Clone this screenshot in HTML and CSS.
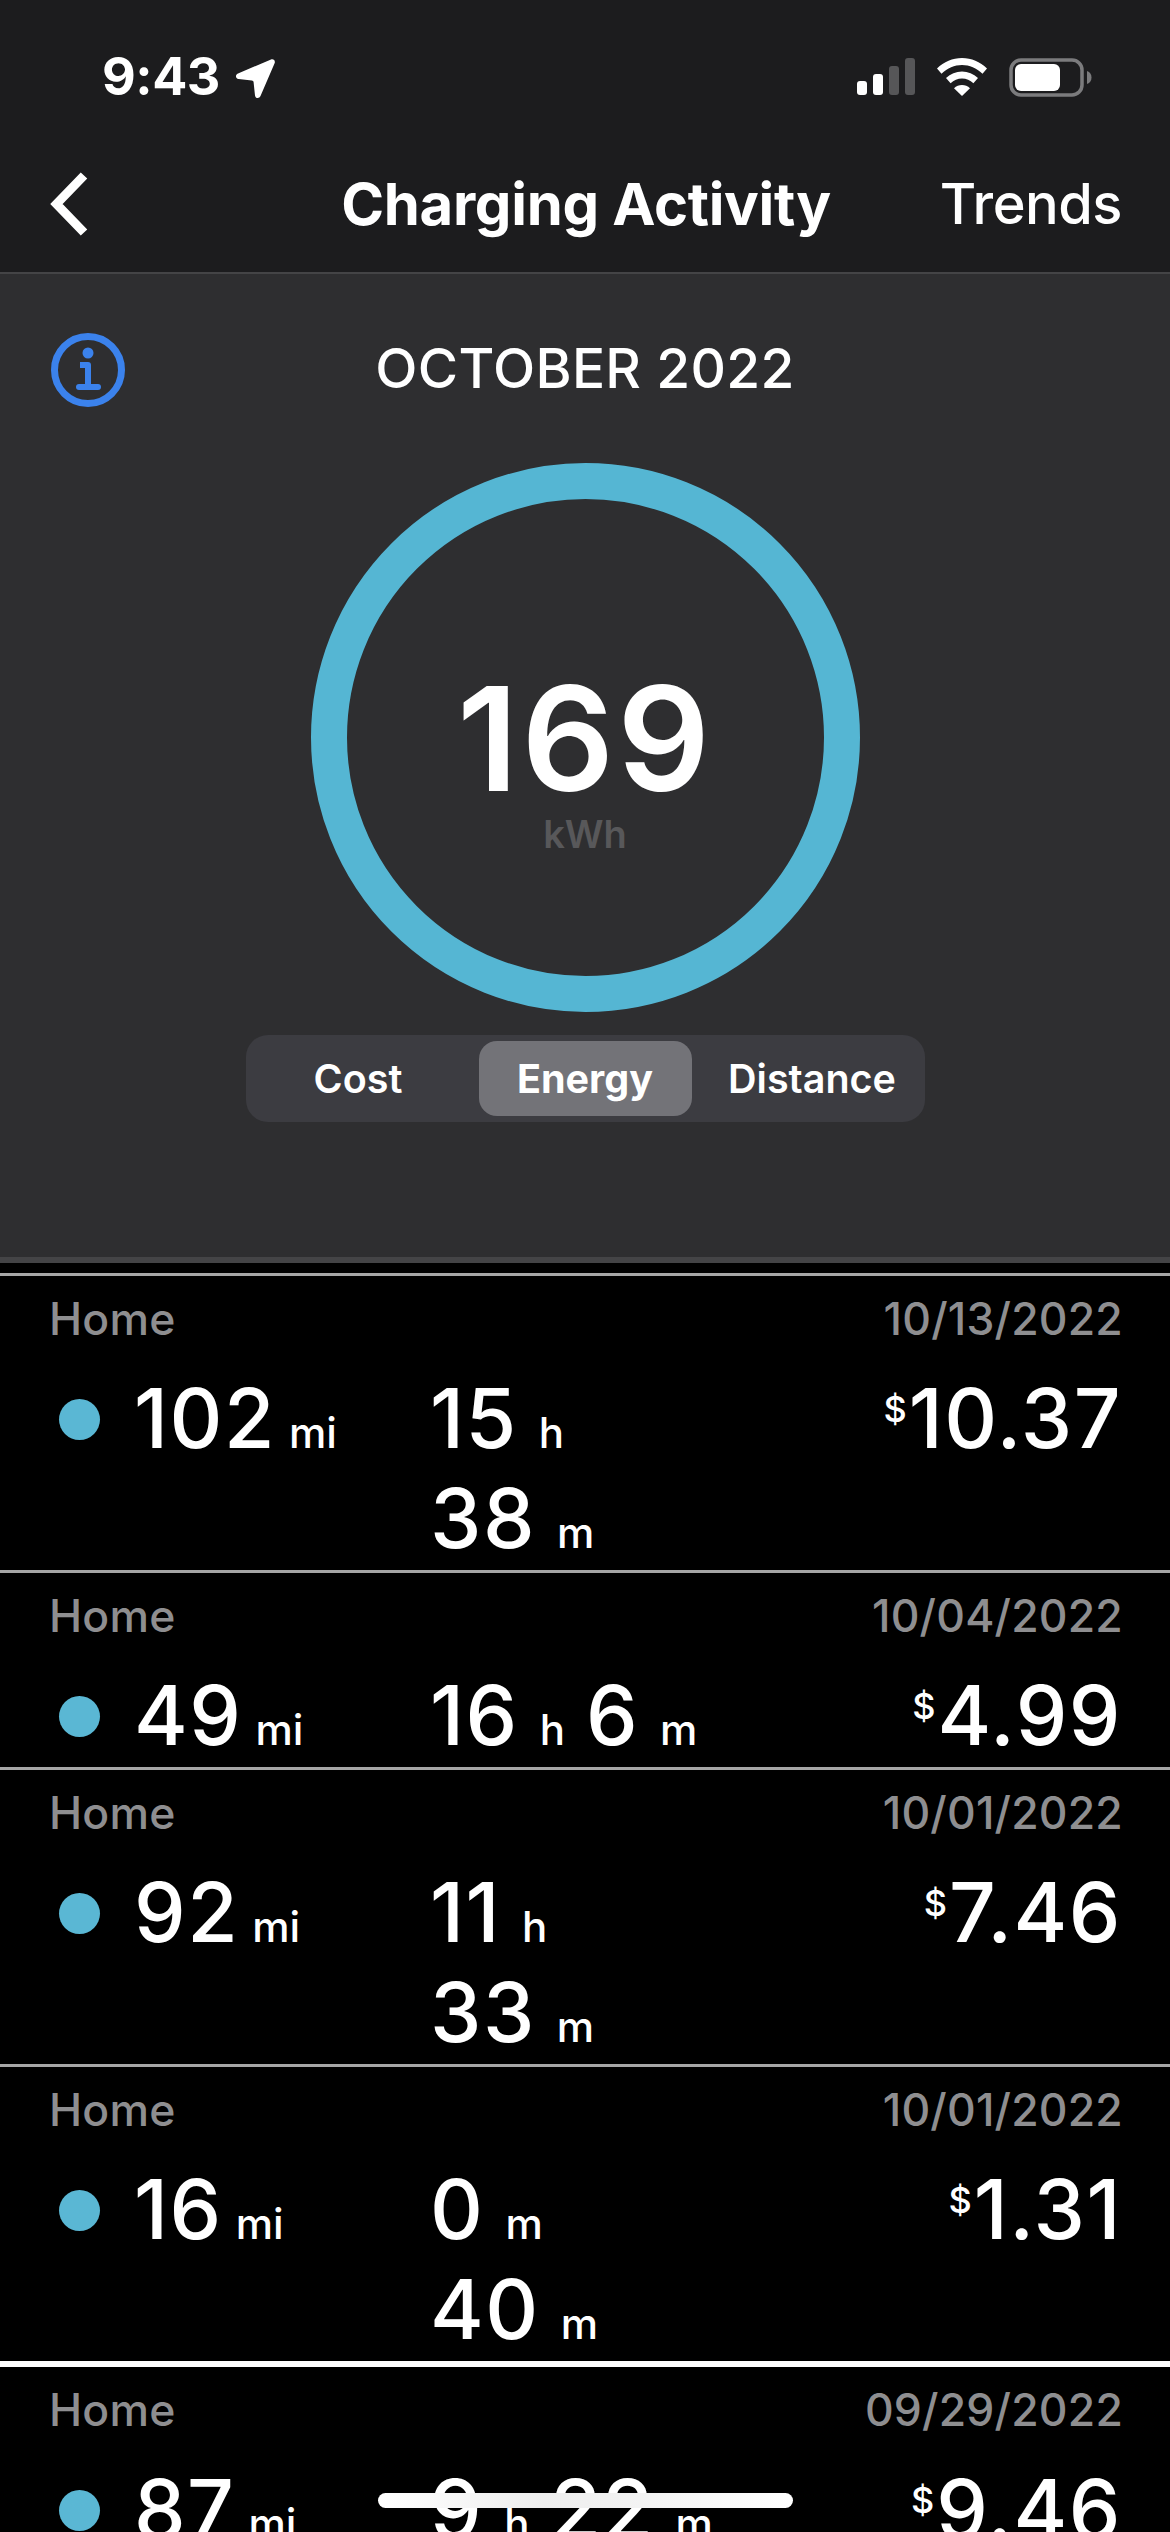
FILE: index.html
```html
<!DOCTYPE html>
<html lang="en">
<head>
<meta charset="utf-8">
<title>Charging Activity</title>
<link rel="stylesheet" href="styles.css">
</head>
<body>
<div class="screen">
  <header class="top">
    <div class="status">
      <div class="status-left">
        <span class="clock">9:43</span>
        <svg class="loc" width="41" height="41" viewBox="0 0 41 41"><path d="M36 1.500C38.500.6 40.600 2.600 39.600 5.200L25.500 38c-1.200 2.900-5.200 2.500-5.500-.6L18.600 24.200c-.1-1-.8-1.700-1.800-1.800L3.600 21c-3.200-.3-3.600-4.300-.6-5.500z" fill="#fff"/></svg>
      </div>
      <div class="status-right">
        <svg width="58" height="37" viewBox="0 0 58 37"><rect x="0" y="23" width="10" height="14" rx="3" fill="#fff"/><rect x="16" y="16" width="10" height="21" rx="3" fill="#fff"/><rect x="32" y="8" width="10" height="29" rx="3" fill="#565658"/><rect x="48" y="0" width="10" height="37" rx="3" fill="#565658"/></svg>
        <svg width="50" height="38" viewBox="0 0 50 38"><path d="M25 0C15.500 0 7 3.800 0 10.500l4.500 5.200C10.500 10 17.500 7 25 7s14.500 3 20.500 8.700l4.500-5.200C43 3.800 34.500 0 25 0z" fill="#fff"/><path d="M25 13.500c-6 0-11.500 2.300-16 6.500l4.600 5.200c3.200-3 7.100-4.700 11.400-4.700s8.200 1.700 11.400 4.700L41 20c-4.500-4.200-10-6.500-16-6.500z" fill="#fff"/><path d="M25 27c-3 0-5.700 1.100-8 3.200L25 38l8-7.800C30.700 28.100 28 27 25 27z" fill="#fff"/></svg>
        <svg class="batt" width="83" height="39" viewBox="0 0 83 39"><rect x="2" y="2" width="71" height="35" rx="10" fill="none" stroke="#7b7b7d" stroke-width="3.500"/><rect x="6" y="6" width="45" height="27" rx="6" fill="#fff"/><path d="M78 13c3 1 4.500 3.500 4.500 6.500S81 25 78 26z" fill="#7b7b7d"/></svg>
      </div>
    </div>
    <nav class="nav">
      <svg class="back" width="40" height="64" viewBox="0 0 40 64"><path d="M34 3.500L6.500 32 34 60.500" fill="none" stroke="#fff" stroke-width="9"/></svg>
      <h1 class="title">Charging Activity</h1>
      <span class="trends">Trends</span>
    </nav>
  </header>

  <section class="summary">
    <div class="heading">
      <svg class="info" width="74" height="74" viewBox="0 0 74 74"><circle cx="37" cy="37" r="33.500" fill="none" stroke="#3b82ec" stroke-width="7"/><circle cx="37" cy="20" r="5.500" fill="#3b82ec"/><path d="M29 32h8v21" fill="none" stroke="#3b82ec" stroke-width="6" stroke-linejoin="round"/><path d="M28 54h19" stroke="#3b82ec" stroke-width="6" stroke-linecap="round"/></svg>
      <h2 class="month">OCTOBER 2022</h2>
    </div>
    <div class="ring">
      <div class="ring-value">169</div>
      <div class="ring-unit">kWh</div>
    </div>
    <div class="segments">
      <div class="segment">Cost</div>
      <div class="segment segment-on">Energy</div>
      <div class="segment">Distance</div>
    </div>
  </section>
  <div class="band"></div>

  <main class="list">
    <article class="row">
      <div class="row-head"><span>Home</span><span>10/13/2022</span></div>
      <div class="row-body">
        <div class="dist"><i class="dot"></i><span class="num">102</span><span class="unit">mi</span></div>
        <div class="time"><span class="part"><span class="num">15</span><span class="unit-t">h</span></span><span class="part"><span class="num">38</span><span class="unit-t">m</span></span></div>
        <div class="cost"><span class="cur">$</span><span class="num">10.37</span></div>
      </div>
    </article>
    <article class="row">
      <div class="row-head"><span>Home</span><span>10/04/2022</span></div>
      <div class="row-body">
        <div class="dist"><i class="dot"></i><span class="num">49</span><span class="unit">mi</span></div>
        <div class="time"><span class="part"><span class="num">16</span><span class="unit-t">h</span></span><span class="part"><span class="num">6</span><span class="unit-t">m</span></span></div>
        <div class="cost"><span class="cur">$</span><span class="num">4.99</span></div>
      </div>
    </article>
    <article class="row">
      <div class="row-head"><span>Home</span><span>10/01/2022</span></div>
      <div class="row-body">
        <div class="dist"><i class="dot"></i><span class="num">92</span><span class="unit">mi</span></div>
        <div class="time"><span class="part"><span class="num">11</span><span class="unit-t">h</span></span><span class="part"><span class="num">33</span><span class="unit-t">m</span></span></div>
        <div class="cost"><span class="cur">$</span><span class="num">7.46</span></div>
      </div>
    </article>
    <article class="row row-thick">
      <div class="row-head"><span>Home</span><span>10/01/2022</span></div>
      <div class="row-body">
        <div class="dist"><i class="dot"></i><span class="num">16</span><span class="unit">mi</span></div>
        <div class="time"><span class="part"><span class="num">0</span><span class="unit-t">m</span></span><span class="part"><span class="num">40</span><span class="unit-t">m</span></span></div>
        <div class="cost"><span class="cur">$</span><span class="num">1.31</span></div>
      </div>
    </article>
    <article class="row">
      <div class="row-head"><span>Home</span><span>09/29/2022</span></div>
      <div class="row-body">
        <div class="dist"><i class="dot"></i><span class="num">87</span><span class="unit">mi</span></div>
        <div class="time"><span class="part"><span class="num">9</span><span class="unit-t">h</span></span><span class="part"><span class="num">22</span><span class="unit-t">m</span></span></div>
        <div class="cost"><span class="cur">$</span><span class="num">9.46</span></div>
      </div>
    </article>
  </main>
  <div class="home-bar"></div>
</div>
</body>
</html>
```

FILE: styles.css
```css
* { box-sizing: border-box; }
html, body { margin: 0; padding: 0; background: #000; }
body { font-family: Inter, "Liberation Sans", sans-serif; color: #fff; }
h1, h2 { margin: 0; font: inherit; }

.screen { position: relative; width: 1170px; height: 2532px; overflow: hidden; background: #000; }

.top { background: #1c1c1e; height: 274px; border-bottom: 2px solid #444446; }
.status { display: flex; justify-content: space-between; align-items: flex-start; height: 168px; padding: 58px 78px 0 102px; }
.status-left { display: flex; align-items: flex-start; gap: 15px; }
.clock { font-size: 52px; font-weight: 700; line-height: 38px; letter-spacing: -0.5px; }
.status-right { display: flex; align-items: flex-start; gap: 22px; }
.status-right svg { display: block; }

.nav { display: grid; grid-template-columns: 1fr auto 1fr; align-items: center; height: 76px; padding: 0 48px 0 50px; margin-top: -2px; }
.back { display: block; }
.title { font-size: 58px; font-weight: 700; line-height: 76px; letter-spacing: -0.3px; }
.trends { font-size: 56px; font-weight: 500; line-height: 76px; text-align: right; letter-spacing: -0.5px; }

.summary { height: 983px; background: #2e2e30; display: flex; flex-direction: column; align-items: center; }
.heading { position: relative; width: 100%; height: 189px; padding-top: 59px; text-align: center; }
.info { position: absolute; left: 51px; top: 59px; display: block; }
.month { font-size: 55px; font-weight: 500; line-height: 70px; letter-spacing: 0.3px; }

.ring { width: 549px; height: 549px; border: 36px solid #55b6d3; border-radius: 50%; display: flex; flex-direction: column; align-items: center; padding-top: 180px; }
.ring-value { font-size: 145px; font-weight: 600; line-height: 120px; letter-spacing: 3px; }
.ring-unit { font-size: 38px; font-weight: 600; line-height: 46px; margin-top: 12px; color: #58585a; }

.segments { display: grid; grid-template-columns: repeat(3, 213px); column-gap: 14px; width: 679px; height: 87px; margin-top: 23px; padding: 6px; background: #3c3c41; border-radius: 22px; }
.segment { display: flex; align-items: center; justify-content: center; font-size: 39.500px; font-weight: 600; border-radius: 18px; }
.segment-on { background: #737378; font-weight: 700; }

.band { height: 6px; background: #444446; }

.list { padding-top: 10px; }
.row { border-top: 3px solid #a6a6a6; }
.row-thick + .row { border-top: 6px solid #fff; }
.row-head { display: flex; justify-content: space-between; height: 93px; padding: 18px 47px 0 49px; font-size: 44.500px; font-weight: 500; line-height: 50px; color: #8e8e90; letter-spacing: 0.2px; }
.row-body { display: flex; padding: 0 48px 1px 59px; line-height: 100px; }
.dist { display: flex; align-items: baseline; width: 371px; }
.dot { align-self: flex-start; flex: none; width: 41px; height: 41px; margin: 30px 34px 0 0; border-radius: 50%; background: #5ab7d4; }
.num { font-size: 82px; font-weight: 550; letter-spacing: 1.5px; }
.unit { font-size: 42px; font-weight: 500; line-height: 42px; margin-left: 13px; }
.time { display: flex; flex-wrap: wrap; align-items: baseline; column-gap: 21px; width: 290px; flex: none; }
.part { display: inline-flex; align-items: baseline; }
.unit-t { font-size: 42px; font-weight: 500; line-height: 42px; margin-left: 21px; }
.cost { flex: 1; display: flex; justify-content: flex-end; align-items: flex-start; }
.cur { font-size: 36px; font-weight: 500; line-height: 40px; margin: 20px 2px 0 0; }

.home-bar { position: absolute; left: 378px; top: 2493px; width: 415px; height: 15px; border-radius: 8px; background: linear-gradient(90deg, #fff 0%, #eee 40%, #f2f2f2 60%, #fff 100%); }
```
